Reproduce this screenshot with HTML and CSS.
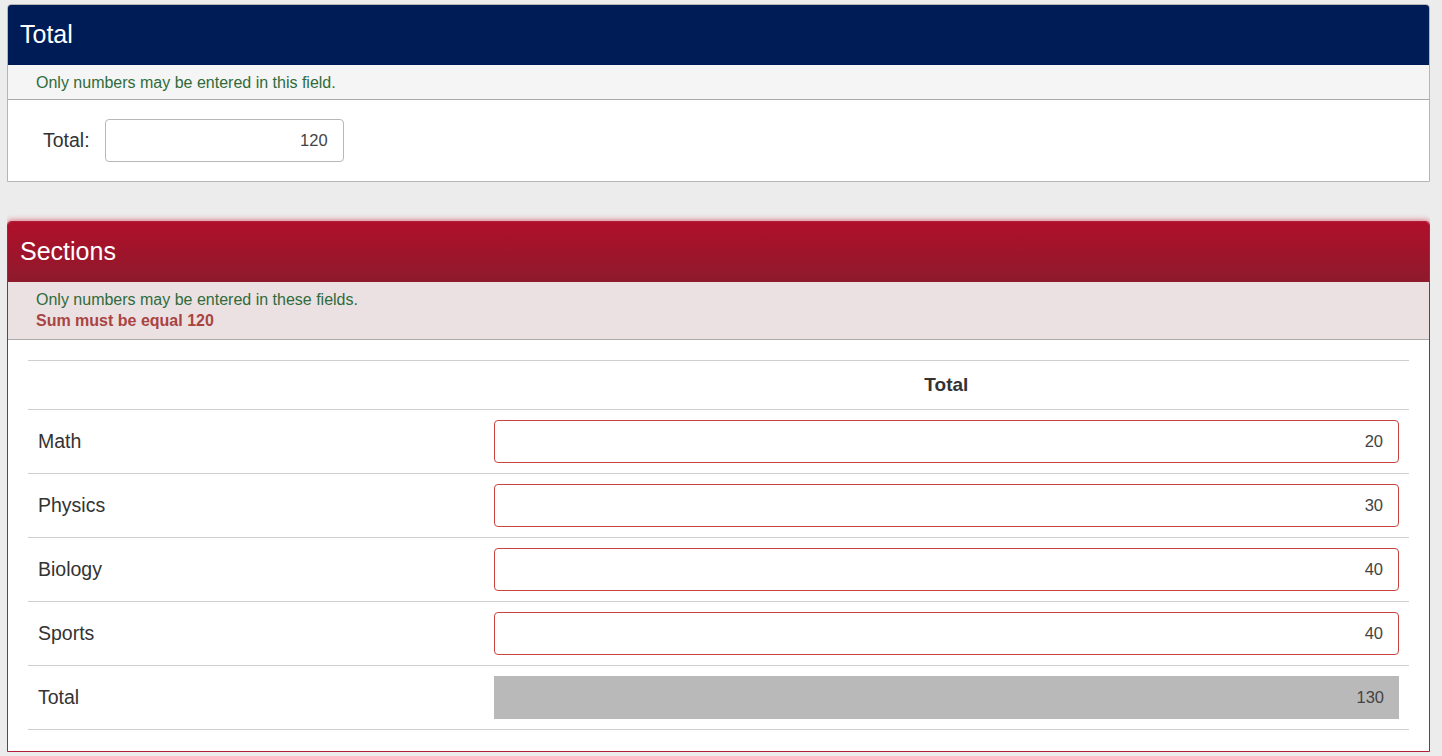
FILE: index.html
```html
<!DOCTYPE html>
<html>
<head>
    <title>Total and Sections</title>
    <link rel="stylesheet" href="styles.css">
</head>
<body>
    <div class="panel">
        <div class="panel-heading">Total</div>
        <div class="panel-note">
            <div class="hint">Only numbers may be entered in this field.</div>
        </div>
        <div class="panel-body total-body">
            <label for="total">Total:</label>
            <input type="text" id="total" class="field" value="120">
        </div>
    </div>

    <div class="panel panel-error">
        <div class="panel-heading">Sections</div>
        <div class="panel-note">
            <div class="hint">Only numbers may be entered in these fields.</div>
            <div class="error">Sum must be equal 120</div>
        </div>
        <div class="panel-body">
            <table class="sections">
                <thead>
                    <tr>
                        <th class="name-col"></th>
                        <th>Total</th>
                    </tr>
                </thead>
                <tbody>
                    <tr>
                        <td>Math</td>
                        <td><input type="text" class="field invalid" value="20"></td>
                    </tr>
                    <tr>
                        <td>Physics</td>
                        <td><input type="text" class="field invalid" value="30"></td>
                    </tr>
                    <tr>
                        <td>Biology</td>
                        <td><input type="text" class="field invalid" value="40"></td>
                    </tr>
                    <tr>
                        <td>Sports</td>
                        <td><input type="text" class="field invalid" value="40"></td>
                    </tr>
                    <tr>
                        <td>Total</td>
                        <td><input type="text" class="field sum" value="130" readonly></td>
                    </tr>
                </tbody>
            </table>
        </div>
    </div>
</body>
</html>
```

FILE: styles.css
```css
body {
    font-family: "Liberation Sans", Arial, sans-serif;
    background-color: #ececec;
    margin: 4px 12px 0 7px;
    color: #333;
}

.panel {
    background-color: white;
    border: 1px solid #b5b5b5;
    border-radius: 4px 4px 0 0;
    margin-bottom: 39px;
}

.panel-heading {
    background-color: #001c57;
    color: white;
    font-size: 25px;
    height: 60px;
    line-height: 58px;
    padding-left: 12px;
    border-radius: 3px 3px 0 0;
}

.panel-note {
    background-color: #f5f5f5;
    border-bottom: 1px solid #aaa;
    padding: 7px 28px 6px;
    font-size: 16px;
    line-height: 21px;
}

.hint {
    color: #2f6b3b;
}

.error {
    color: #a94442;
    font-weight: bold;
    margin-bottom: 2px;
}

.panel-body {
    padding: 20px 20px 21px;
}

.total-body {
    display: flex;
    align-items: center;
    padding: 19px 20px 19px 35px;
}

.total-body label {
    font-size: 19.5px;
    margin-right: 15px;
}

.field {
    font-family: "Liberation Sans", Arial, sans-serif;
    font-size: 16.5px;
    color: #444;
    text-align: right;
    height: 43px;
    padding: 0 15px;
    border: 1px solid #b8b8b8;
    border-radius: 4px;
    box-sizing: border-box;
    background-color: white;
}

.total-body .field {
    width: 239px;
}

/* sections panel */
.panel-error {
    border-color: #b0203a;
    box-shadow: 0 0 6px rgba(210, 30, 60, 0.75);
    margin-bottom: 0;
}

.panel-error .panel-heading {
    background: linear-gradient(to bottom, #b00f2a, #8e1a2c);
}

.panel-error .panel-note {
    background-color: #ebe1e2;
}

.sections {
    width: 100%;
    border-collapse: collapse;
    font-size: 19.5px;
}

.sections th,
.sections td {
    border-top: 1px solid #cfcfcf;
    border-bottom: 1px solid #cfcfcf;
    padding: 10px;
    text-align: left;
}

.sections th {
    height: 28px;
    text-align: center;
    font-weight: bold;
    font-size: 19px;
}

.sections .name-col {
    width: 33%;
}

.sections td .field {
    width: 100%;
    display: block;
}

.field.invalid {
    border-color: #c9443e;
}

.field.sum {
    background-color: #b9b9b9;
    border: none;
    border-radius: 0;
}
```
